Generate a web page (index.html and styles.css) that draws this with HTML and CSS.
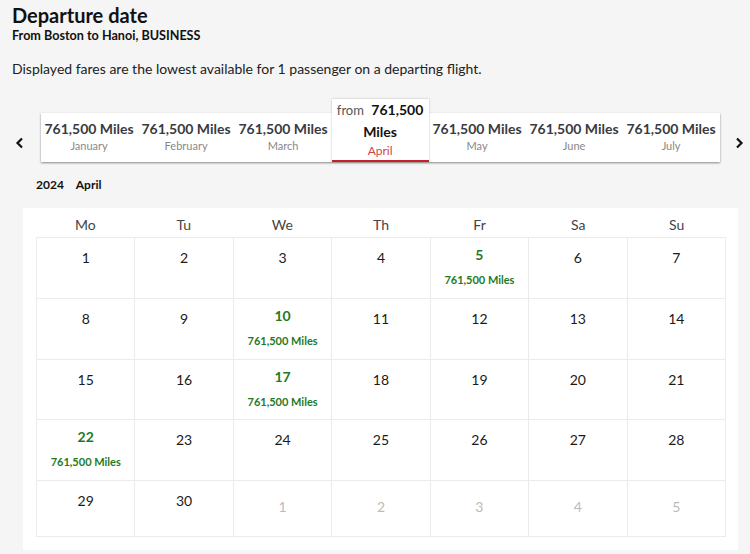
FILE: index.html
```html
<!DOCTYPE html>
<html lang="en">

<head>
      <meta charset="UTF-8">
      <meta name="viewport" content="width=device-width, initial-scale=1.0">
      <title>Departure date</title>
      <link rel="stylesheet" href="styles.css">
</head>

<body>
      <div class="header">
            <h1>Departure date</h1>
            <div class="route">From Boston to Hanoi, BUSINESS</div>
            <p class="note">Displayed fares are the lowest available for 1 passenger on a departing flight.</p>
      </div>

      <!-- Thanh chọn tháng -->
      <div class="months">
            <div class="arrow">
                  <svg width="10" height="12" viewBox="0 0 10 12"><path d="M7 1.5 L2.5 6 L7 10.5" fill="none" stroke="#111" stroke-width="2.2"/></svg>
            </div>
            <div class="strip">
                  <div class="tab"><div class="miles">761,500 Miles</div><div class="month">January</div></div>
                  <div class="tab"><div class="miles">761,500 Miles</div><div class="month">February</div></div>
                  <div class="tab"><div class="miles">761,500 Miles</div><div class="month">March</div></div>
                  <div class="tab active">
                        <div class="miles"><span class="from">from</span> 761,500<br>Miles</div>
                        <div class="month">April</div>
                  </div>
                  <div class="tab"><div class="miles">761,500 Miles</div><div class="month">May</div></div>
                  <div class="tab"><div class="miles">761,500 Miles</div><div class="month">June</div></div>
                  <div class="tab"><div class="miles">761,500 Miles</div><div class="month">July</div></div>
            </div>
            <div class="arrow">
                  <svg width="10" height="12" viewBox="0 0 10 12"><path d="M3 1.5 L7.5 6 L3 10.5" fill="none" stroke="#111" stroke-width="2.2"/></svg>
            </div>
      </div>

      <div class="current">2024 <span>April</span></div>

      <!-- Lịch -->
      <div class="calendar">
            <div class="weekdays">
                  <div>Mo</div><div>Tu</div><div>We</div><div>Th</div><div>Fr</div><div>Sa</div><div>Su</div>
            </div>
            <div class="days">
                  <div class="day">1</div>
                  <div class="day">2</div>
                  <div class="day">3</div>
                  <div class="day">4</div>
                  <div class="day fare"><b>5</b><span>761,500 Miles</span></div>
                  <div class="day">6</div>
                  <div class="day">7</div>

                  <div class="day">8</div>
                  <div class="day">9</div>
                  <div class="day fare"><b>10</b><span>761,500 Miles</span></div>
                  <div class="day">11</div>
                  <div class="day">12</div>
                  <div class="day">13</div>
                  <div class="day">14</div>

                  <div class="day">15</div>
                  <div class="day">16</div>
                  <div class="day fare"><b>17</b><span>761,500 Miles</span></div>
                  <div class="day">18</div>
                  <div class="day">19</div>
                  <div class="day">20</div>
                  <div class="day">21</div>

                  <div class="day fare"><b>22</b><span>761,500 Miles</span></div>
                  <div class="day">23</div>
                  <div class="day">24</div>
                  <div class="day">25</div>
                  <div class="day">26</div>
                  <div class="day">27</div>
                  <div class="day">28</div>

                  <div class="day">29</div>
                  <div class="day">30</div>
                  <div class="day other">1</div>
                  <div class="day other">2</div>
                  <div class="day other">3</div>
                  <div class="day other">4</div>
                  <div class="day other">5</div>
            </div>
      </div>
</body>

</html>
```

FILE: styles.css
```css
/* Toàn trang */
body {
      margin: 0;
      background-color: #f5f5f5;
      font-family: Lato, "Open Sans", sans-serif;
      color: #1a1a1a;
}

/* Tiêu đề */
.header {
      padding: 4px 12px 0;
}

.header h1 {
      margin: 0;
      font-size: 20px;
      line-height: 22px;
      font-weight: 700;
      color: #111;
}

.route {
      font-size: 12.6px;
      font-weight: 700;
      line-height: 16px;
      margin-top: 2px;
      color: #111;
}

.note {
      margin: 16px 0 0;
      font-size: 14px;
      line-height: 18px;
      color: #222;
}

/* Thanh tháng */
.months {
      display: flex;
      align-items: flex-end;
      margin-top: 21px;
}

.arrow {
      width: 42px;
      height: 49px;
      box-sizing: border-box;
      padding-top: 11px;
      display: flex;
      align-items: center;
      justify-content: center;
}

.arrow:last-child {
      width: 31px;
      justify-content: flex-start;
      padding-left: 14px;
}

.strip {
      display: flex;
      align-items: flex-end;
      position: relative;
}

/* Nền trắng chung của dải tháng */
.strip::before {
      content: '';
      position: absolute;
      left: 0;
      right: 0;
      bottom: 0;
      height: 49px;
      background-color: #fff;
      box-shadow: 0 1px 2px rgba(0, 0, 0, 0.45);
}

.tab {
      width: 97px;
      height: 49px;
      box-sizing: border-box;
      text-align: center;
      padding-top: 8px;
      position: relative;
}

.tab .miles {
      font-size: 14px;
      line-height: 16px;
      font-weight: 700;
      color: #3a3a42;
      white-space: nowrap;
}

.tab .month {
      font-size: 11px;
      line-height: 14px;
      margin-top: 2px;
      color: #888;
}

.tab.active {
      height: 63px;
      padding-top: 0;
      background-color: #fff;
      border-bottom: 2px solid #c8202a;
      box-shadow: 0 0 2px rgba(0, 0, 0, 0.25);
      z-index: 1;
}

.tab.active .miles {
      font-size: 14px;
      line-height: 21px;
      color: #111;
}

.tab.active .from {
      font-size: 13px;
      font-weight: 400;
      color: #555;
      margin-right: 4px;
}

.tab.active .month {
      margin-top: 2px;
      color: #d0454a;
      font-size: 12px;
}

/* Năm / tháng hiện tại */
.current {
      font-size: 12px;
      font-weight: 700;
      margin: 15px 0 0 36px;
      line-height: 16px;
      color: #111;
}

.current span {
      margin-left: 9px;
}

/* Lịch */
.calendar {
      margin: 15px 0 0 23px;
      width: 715px;
      box-sizing: border-box;
      background-color: #fff;
      padding: 0 12px 13px 13px;
}

.weekdays {
      display: grid;
      grid-template-columns: repeat(7, 1fr);
      height: 29px;
      box-sizing: border-box;
      padding-top: 3px;
      align-items: center;
      text-align: center;
      font-size: 14px;
      color: #444;
}

.days {
      display: grid;
      grid-template-columns: repeat(7, 1fr);
      grid-template-rows: 61px 61px 60px 61px 56px;
      border-top: 1px solid #ebebeb;
      border-left: 1px solid #ebebeb;
}

.day {
      border-right: 1px solid #ebebeb;
      border-bottom: 1px solid #ebebeb;
      text-align: center;
      font-size: 14px;
      line-height: 20px;
      padding-top: 10px;
      color: #1a1a1a;
}

.day.fare {
      padding-top: 7px;
      color: #1f7a1f;
}

.day.fare b {
      display: block;
      font-size: 14px;
}

.day.fare span {
      display: block;
      font-size: 11px;
      font-weight: 700;
      line-height: 16px;
      margin-top: 7px;
}

.day.other {
      color: #bbb;
      padding-top: 16px;
}
```
